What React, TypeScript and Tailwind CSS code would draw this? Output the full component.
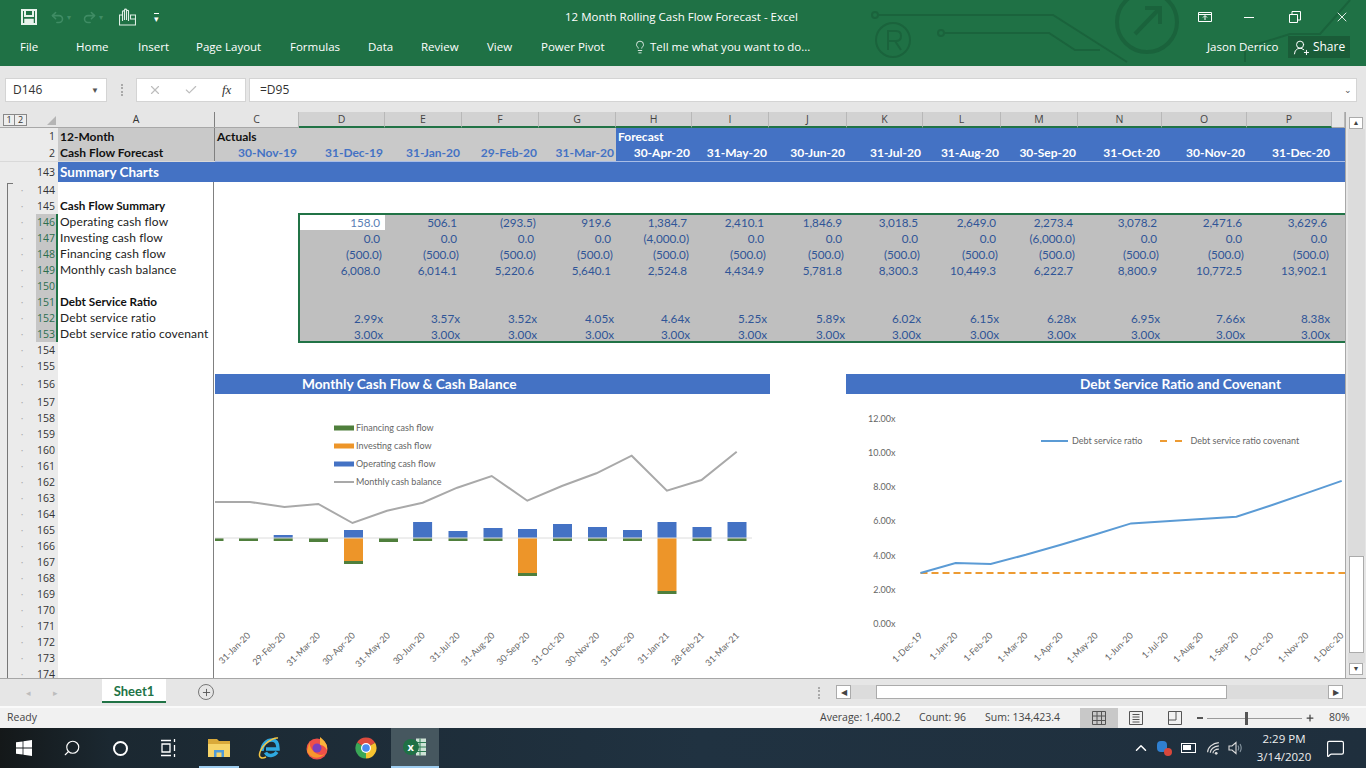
import { Check, ChevronUp, Lightbulb, MessageSquare, Plus, Redo2, Search, Undo2, UserRoundPlus, X } from "lucide-react"

const colLetters = ["C", "D", "E", "F", "G", "H", "I", "J", "K", "L", "M", "N", "O", "P", ""]
const colGrid = "grid grid-cols-[84px_86px_77px_77px_77px_76px_77px_78px_76px_78px_77px_84px_85px_85px_13px]"
const panelGrid = "grid grid-cols-[86px_77px_77px_77px_76px_77px_78px_76px_78px_77px_84px_85px_85px_13px]"
const dates = ["30-Nov-19", "31-Dec-19", "31-Jan-20", "29-Feb-20", "31-Mar-20", "30-Apr-20", "31-May-20", "30-Jun-20", "31-Jul-20", "31-Aug-20", "30-Sep-20", "31-Oct-20", "30-Nov-20", "31-Dec-20"]

const dsr = [2.99, 3.57, 3.52, 4.05, 4.64, 5.25, 5.89, 6.02, 6.15, 6.28, 6.95, 7.66, 8.38]

// data rows inside the selection, row 146 to 153
const panelRows: string[][] = [
  ["158.0", "506.1", "(293.5)", "919.6", "1,384.7", "2,410.1", "1,846.9", "3,018.5", "2,649.0", "2,273.4", "3,078.2", "2,471.6", "3,629.6"],
  ["0.0", "0.0", "0.0", "0.0", "(4,000.0)", "0.0", "0.0", "0.0", "0.0", "(6,000.0)", "0.0", "0.0", "0.0"],
  ["(500.0)", "(500.0)", "(500.0)", "(500.0)", "(500.0)", "(500.0)", "(500.0)", "(500.0)", "(500.0)", "(500.0)", "(500.0)", "(500.0)", "(500.0)"],
  ["6,008.0", "6,014.1", "5,220.6", "5,640.1", "2,524.8", "4,434.9", "5,781.8", "8,300.3", "10,449.3", "6,222.7", "8,800.9", "10,772.5", "13,902.1"],
  [],
  [],
  dsr.map((v) => v.toFixed(2) + "x"),
  dsr.map(() => "3.00x"),
]

type SheetRow = { n: number; h: string; label?: string; bold?: boolean }
const sheetRows: SheetRow[] = [
  { n: 144, h: "h-[16px]" },
  { n: 145, h: "h-[16px]", label: "Cash Flow Summary", bold: true },
  { n: 146, h: "h-[16px]", label: "Operating cash flow" },
  { n: 147, h: "h-[16px]", label: "Investing cash flow" },
  { n: 148, h: "h-[16px]", label: "Financing cash flow" },
  { n: 149, h: "h-[16px]", label: "Monthly cash balance" },
  { n: 150, h: "h-[16px]" },
  { n: 151, h: "h-[16px]", label: "Debt Service Ratio", bold: true },
  { n: 152, h: "h-[16px]", label: "Debt service ratio" },
  { n: 153, h: "h-[16px]", label: "Debt service ratio covenant" },
  { n: 154, h: "h-[16px]" },
  { n: 155, h: "h-[16px]" },
  { n: 156, h: "h-[20px]" },
  ...Array.from({ length: 18 }, (_, i) => ({ n: 157 + i, h: "h-[16px]" })),
]

const bars = [
  { x: 214, blue: 0, orange: 0, green: 3 },
  { x: 248.5, blue: 0, orange: 0, green: 3 },
  { x: 283.2, blue: 3, orange: 0, green: 3 },
  { x: 318.5, blue: 0, orange: 0, green: 4 },
  { x: 353.5, blue: 8, orange: 23, green: 3 },
  { x: 388.5, blue: 0, orange: 0, green: 4 },
  { x: 422.6, blue: 16, orange: 0, green: 3 },
  { x: 458, blue: 7, orange: 0, green: 3 },
  { x: 493, blue: 10, orange: 0, green: 3 },
  { x: 527.5, blue: 9, orange: 35, green: 3 },
  { x: 562.5, blue: 14, orange: 0, green: 3 },
  { x: 597.5, blue: 11, orange: 0, green: 3 },
  { x: 632.5, blue: 8, orange: 0, green: 3 },
  { x: 667, blue: 16, orange: 53, green: 3 },
  { x: 702, blue: 11, orange: 0, green: 3 },
  { x: 737, blue: 16, orange: 0, green: 3 },
]
const balanceLine = "215,502 250,502 284.5,507 318.3,504 352.5,523 387,510.7 422.6,502.7 457.2,487.7 491.7,476 527.3,500.7 561.9,486 596.4,473.3 631.7,455.7 666.9,490.7 701.5,480 736.7,451.7"
const leftLabels = ["31-Jan-20", "29-Feb-20", "31-Mar-20", "30-Apr-20", "31-May-20", "30-Jun-20", "31-Jul-20", "31-Aug-20", "30-Sep-20", "31-Oct-20", "30-Nov-20", "31-Dec-20", "31-Jan-21", "28-Feb-21", "31-Mar-21"]
const rightLabels = ["1-Dec-19", "1-Jan-20", "1-Feb-20", "1-Mar-20", "1-Apr-20", "1-May-20", "1-Jun-20", "1-Jul-20", "1-Aug-20", "1-Sep-20", "1-Oct-20", "1-Nov-20", "1-Dec-20"]
const axisLabels = ["12.00x", "10.00x", "8.00x", "6.00x", "4.00x", "2.00x", "0.00x"]

function CashFlowChart() {
  const base = 538
  return (
    <svg viewBox="215 394 555 284" className="block w-[555px] h-[284px] font-['Lato']">
      {bars.map((b) => (
        <g key={b.x}>
          {b.blue > 0 && <rect x={b.x - 9.5} y={base - b.blue} width="19" height={b.blue} fill="#4472c4" />}
          {b.orange > 0 && <rect x={b.x - 9.5} y={base} width="19" height={b.orange} fill="#ed9529" />}
          <rect x={b.x - 9.5} y={base + b.orange} width="19" height={b.green} fill="#4f7f3c" />
        </g>
      ))}
      <line x1="215" x2="752" y1="538" y2="538" stroke="#dcdcdc" />
      <polyline points={balanceLine} fill="none" stroke="#a9a9a9" strokeWidth="2" />
      <rect x="334" y="425.5" width="20" height="5" fill="#4f7f3c" />
      <rect x="334" y="443.5" width="20" height="5" fill="#ed9529" />
      <rect x="334" y="461.5" width="20" height="5" fill="#4472c4" />
      <line x1="334" x2="354" y1="482" y2="482" stroke="#a9a9a9" strokeWidth="2" />
      {["Financing cash flow", "Investing cash flow", "Operating cash flow", "Monthly cash balance"].map((t, i) => (
        <text key={t} x="356" y={431 + i * 18} className="text-[9px] fill-[#666666]">{t}</text>
      ))}
      {leftLabels.map((t, i) => (
        <text key={t} textAnchor="end" transform={`translate(${251 + i * 34.9} 636) rotate(-45)`} className="text-[9px] fill-[#666666]">{t}</text>
      ))}
    </svg>
  )
}

function RatioChart() {
  const ratioY = (v: number) => 624 - v * 17.08
  const ratioX = (i: number) => 920.5 + i * 35.1
  return (
    <svg viewBox="846 394 499 284" className="block w-[499px] h-[284px] font-['Lato']">
      {axisLabels.map((t, i) => (
        <text key={t} x="895.5" y={422 + i * 34.16} textAnchor="end" className="text-[9px] fill-[#666666]">{t}</text>
      ))}
      <line x1="920.5" x2="1345" y1="573" y2="573" stroke="#ed9b33" strokeWidth="2" strokeDasharray="7 4" />
      <polyline points={dsr.map((v, i) => `${ratioX(i)},${ratioY(v)}`).join(" ")} fill="none" stroke="#5b9bd5" strokeWidth="2" />
      <line x1="1041" x2="1068" y1="441" y2="441" stroke="#5b9bd5" strokeWidth="2" />
      <text x="1072" y="444" className="text-[9px] fill-[#666666]">Debt service ratio</text>
      <line x1="1160" x2="1182" y1="441" y2="441" stroke="#ed9b33" strokeWidth="2" strokeDasharray="7 8" />
      <text x="1190.5" y="444" className="text-[9px] fill-[#666666]">Debt service ratio covenant</text>
      {rightLabels.map((t, i) => (
        <text key={t} textAnchor="end" transform={`translate(${923 + i * 35.1} 636) rotate(-45)`} className="text-[9px] fill-[#666666]">{t}</text>
      ))}
    </svg>
  )
}

function TitleBar() {
  const tabs = [
    { t: "Home", c: "w-[62px]" },
    { t: "Insert", c: "w-[58px]" },
    { t: "Page Layout", c: "w-[94px]" },
    { t: "Formulas", c: "w-[78px]" },
    { t: "Data", c: "w-[53px]" },
    { t: "Review", c: "w-[66px]" },
    { t: "View", c: "w-[54px]" },
    { t: "Power Pivot", c: "w-[92px]" },
  ]
  return (
    <div className="relative h-[66px] shrink-0 bg-[#1f7145] text-white font-['Open_Sans'] text-[11.5px] whitespace-nowrap">
      <svg viewBox="0 0 1366 66" className="absolute inset-0 w-[1366px] h-[66px]" fill="none" stroke="#1a633c" strokeWidth="2">
        <circle cx="875" cy="15" r="3" />
        <path d="M878 15H1053L1127 62" />
        <circle cx="941" cy="33" r="3" />
        <path d="M944 33H1049L1075 50H1100" />
        <circle cx="893" cy="40" r="17" />
        <path d="M888 50V31H896Q901 31 901 36T896 41H888M895 41L901 50" />
        <circle cx="1147" cy="22" r="30" strokeWidth="4" />
        <path d="M1135 34L1160 8M1145 8H1160V24" strokeWidth="4" />
        <path d="M1245 62V48L1290 34H1320L1350 0" />
      </svg>
      <div className="relative flex items-center h-[33px] pt-[1px]">
        <div className="w-[565px] flex items-center">
          <svg viewBox="0 0 16 16" className="ml-[21px] w-[16px] h-[16px]" fill="none" stroke="#e8f3ec" strokeWidth="2">
            <path d="M1 1H15V15H1ZM4 1V7H12V1" />
            <path d="M4 15V10.500H12V15" strokeWidth="1.500" fill="#e8f3ec" />
          </svg>
          <Undo2 className="ml-[13px] w-[15px] h-[15px] text-[#3f8c64]" strokeWidth={2.5} />
          <span className="ml-[2px] text-[8px] text-[#3f8c64]">▾</span>
          <Redo2 className="ml-[11px] w-[15px] h-[15px] text-[#3f8c64]" strokeWidth={2.5} />
          <span className="ml-[2px] text-[8px] text-[#3f8c64]">▾</span>
          <svg viewBox="0 0 17 18" className="ml-[16px] w-[17px] h-[18px]" fill="none" stroke="#dff0e6" strokeWidth="1.100">
            <path d="M3.500 7H.5V17H16.500V7H11.500V11H16.500" />
            <path d="M3.500 13V3.500C3.500 2.500 5.500 2.500 5.500 3.500V12M5.500 12V2C5.500 .8 7.500 .8 7.500 2V12M7.500 12V3C7.500 2 9.500 2 9.500 3V13" />
          </svg>
          <span className="ml-[18px] text-[9px] leading-[9px] border-t border-white mt-[2px]">▾</span>
        </div>
        <span className="w-[300px]">12 Month Rolling Cash Flow Forecast - Excel</span>
        <svg viewBox="0 0 14 14" className="ml-[333px] w-[14px] h-[14px]" fill="none" stroke="#fff">
          <path d="M.5 2.5H13.5V11.5H.5ZM.5 4.5H13.5M7 10V6M5 7.5L7 5.5L9 7.5" />
        </svg>
        <div className="ml-[32px] w-[10px] h-px bg-white" />
        <svg viewBox="0 0 12 12" className="ml-[35px] w-[12px] h-[12px]" fill="none" stroke="#fff">
          <path d="M.5 3.5H8.5V11.5H.5ZM3 3V.5H11.5V9H9" />
        </svg>
        <X className="ml-[33px] w-[16px] h-[16px]" strokeWidth={1.3} />
      </div>
      <div className="relative flex items-center h-[28px]">
        <span className="ml-[20px] w-[56px]">File</span>
        {tabs.map((tab) => (
          <span key={tab.t} className={tab.c}>{tab.t}</span>
        ))}
        <Lightbulb className="mr-[3px] w-[14px] h-[14px]" strokeWidth={1.4} />
        <span className="w-[557px]">Tell me what you want to do...</span>
        <span className="w-[81px]">Jason Derrico</span>
        <div className="w-[62px] h-[22px] bg-[#1a5c38] flex items-center justify-center gap-[3px]">
          <UserRoundPlus className="w-[17px] h-[17px]" strokeWidth={1.4} />
          <span className="text-[12px]">Share</span>
        </div>
      </div>
    </div>
  )
}

function FormulaBar() {
  return (
    <div className="h-[46px] shrink-0 bg-[#e6e6e6] flex items-center font-['Open_Sans'] text-[12px] text-[#333] pt-[2px]">
      <div className="ml-[5px] w-[102px] h-[24px] bg-white border border-[#d4d4d4] flex items-center justify-between px-[7px]">
        <span>D146</span>
        <span className="text-[8px] text-[#555]">▼</span>
      </div>
      <div className="ml-[14px] w-[2px] h-[12px] border-l-2 border-dotted border-[#aaa]" />
      <div className="ml-[13px] w-[110px] h-[24px] bg-white border border-[#d4d4d4] flex items-center">
        <X className="ml-[11px] w-[14px] h-[14px] text-[#bdbdbd]" />
        <Check className="ml-[22px] w-[14px] h-[14px] text-[#bdbdbd]" />
        <span className="ml-[24px] font-['Liberation_Serif'] italic text-[13px] text-[#333]">fx</span>
      </div>
      <div className="ml-[3px] w-[1108px] h-[24px] bg-white border border-[#d4d4d4] flex items-center justify-between pl-[10px] pr-[4px]">
        <span>=D95</span>
        <span className="text-[9px] text-[#555]">⌄</span>
      </div>
    </div>
  )
}

function LeftRows() {
  return (
    <div className="w-[215px] shrink-0 font-['Open_Sans'] text-[10.5px] text-[#333] relative whitespace-nowrap">
      <div className="h-[16px] flex bg-[#e6e6e6] border-b border-[#a8a8a8]">
        <div className="w-[58px] relative flex items-center">
          <div className="ml-[3px] w-[12px] h-[12px] border border-[#888] bg-[#eee] text-[9px] leading-[10px] text-center">1</div>
          <div className="w-[12px] h-[12px] border border-l-0 border-[#888] bg-[#eee] text-[9px] leading-[10px] text-center">2</div>
          <div className="absolute right-[2px] bottom-[2px] w-0 h-0 border-l-[9px] border-l-transparent border-b-[9px] border-b-[#b5b5b5]" />
        </div>
        <div className="w-[157px] border-r border-[#808080] text-center leading-[15px]">A</div>
      </div>
      <div className="flex h-[17px]">
        <div className="w-[58px] bg-[#ebebeb] text-right pr-[3px] leading-[17px]">1</div>
        <div className="w-[156px] bg-[#c9c9c9] pl-[2px] font-['Lato'] font-bold text-[12px] leading-[17px] text-[#111]">12-Month</div>
        <div className="w-px bg-[#808080]" />
      </div>
      <div className="flex h-[17px] border-b border-[#d9d9d9]">
        <div className="w-[58px] bg-[#ebebeb] text-right pr-[3px] leading-[16px]">2</div>
        <div className="w-[156px] bg-[#c9c9c9] pl-[2px] font-['Lato'] font-bold text-[12px] leading-[16px] text-[#111]">Cash Flow Forecast</div>
        <div className="w-px bg-[#808080]" />
      </div>
      <div className="flex h-[20px]">
        <div className="w-[58px] bg-[#ebebeb] text-right pr-[3px] leading-[20px]">143</div>
        <div className="w-[157px] bg-[#4472c4] pl-[2px] font-['Lato'] font-bold text-[13.5px] leading-[20px] text-white">Summary Charts</div>
      </div>
      {sheetRows.map((r) => {
        const selected = r.n >= 146 && r.n <= 153
        return (
          <div key={r.n} className={`flex items-stretch ${r.h}`}>
            <div className="w-[36px] bg-[#ebebeb] flex items-center justify-center">
              <span className="ml-[8px] text-[#aaa] text-[10px]">·</span>
            </div>
            <div className={selected ? "w-[22px] pt-[1px] bg-[#c6c6c6] border-r-2 border-[#217346] flex items-center justify-end pr-[1px] text-[#2d6e4e]" : "w-[22px] pt-[1px] bg-[#ebebeb] flex items-center justify-end pr-[3px]"}>{r.n}</div>
            <div className={r.bold ? "w-[156px] pl-[2px] border-r border-[#808080] font-['Lato'] font-bold text-[11.7px] leading-[15px] text-[#111]" : "w-[156px] pl-[2px] border-r border-[#808080] font-['Lato'] tracking-[0.13px] text-[12px] leading-[16px] text-[#222]"}>{r.label}</div>
          </div>
        )
      })}
      <div className="absolute left-[7px] top-[71px] bottom-0 w-[6px] border-l border-t border-[#777]" />
    </div>
  )
}

function RightSheet() {
  return (
    <div className="w-[1130px] shrink-0 overflow-hidden font-['Lato'] text-[12px]">
      <div className={`${colGrid} h-[16px] bg-[#e6e6e6] font-['Open_Sans'] text-[10.5px] text-[#444]`}>
        {colLetters.map((c, i) => (
          <div key={i} className={i >= 1 && i <= 13 ? "bg-[#d2d2d2] border-b-2 border-[#217346] border-r border-r-[#b8b8b8] text-center leading-[14px]" : "border-b border-[#a8a8a8] border-r border-r-[#b8b8b8] text-center leading-[15px]"}>{c}</div>
        ))}
      </div>
      <div className="flex h-[17px] font-bold leading-[17px]">
        <div className="w-[401px] bg-[#c9c9c9] pl-[2px] text-[#111]">Actuals</div>
        <div className="w-[729px] bg-[#4472c4] pl-[2px] text-white">Forecast</div>
      </div>
      <div className={`${colGrid} h-[17px] bg-[#4472c4] border-b border-[#a9bde6] font-bold leading-[16px]`}>
        {dates.map((d, i) => (
          <div key={d + i} className={i < 5 ? "bg-[#c9c9c9] text-[#4472c4] text-right pr-[2px]" : "text-white text-right pr-[2px]"}>{d}</div>
        ))}
        <div />
      </div>
      <div className="h-[20px] bg-[#4472c4]" />
      <div className="h-[32px]" />
      <div className="ml-[84px] relative w-[1050px] h-[128px] bg-[#bfbfbf] outline-2 -outline-offset-1 outline-[#217346] text-[#2f5597] text-[11.7px]">
        {panelRows.map((cells, r) => (
          <div key={r} className={`${panelGrid} h-[16px] leading-[16px]`}>
            {cells.map((v, c) => (
              <div key={c} className={r === 0 && c === 0 ? "bg-white text-[#5b7fb5] text-right pr-[5px]" : v.startsWith("(") ? "text-right pr-[3px]" : v.endsWith("x") ? "text-right pr-[2px]" : "text-right pr-[5px]"}>{v}</div>
            ))}
          </div>
        ))}
      </div>
      <div className="mt-[32px] flex items-start gap-[76px]">
        <div className="w-[555px] shrink-0">
          <div className="h-[20px] bg-[#4472c4] pl-[87px] text-white font-bold text-[13.7px] leading-[20px]">Monthly Cash Flow &amp; Cash Balance</div>
          <CashFlowChart />
        </div>
        <div className="w-[499px] shrink-0">
          <div className="h-[20px] bg-[#4472c4] text-white font-bold text-[13.7px] leading-[20px] pl-[234px]">Debt Service Ratio and Covenant</div>
          <RatioChart />
        </div>
      </div>
    </div>
  )
}

function VScroll() {
  return (
    <div className="w-[21px] shrink-0 bg-[#e6e6e6] flex flex-col items-center pt-[5px] pb-[3px] border-l border-[#a8a8a8]">
      <div className="w-[14px] h-[12px] bg-white border border-[#ababab] text-[7px] leading-[10px] text-center text-[#444]">▲</div>
      <div className="w-[17px] flex-1 bg-[#dcdcdc]" />
      <div className="w-[15px] h-[97px] bg-white border border-[#ababab]" />
      <div className="w-[17px] h-[10px] bg-[#dcdcdc]" />
      <div className="w-[14px] h-[12px] bg-white border border-[#ababab] text-[7px] leading-[10px] text-center text-[#444]">▼</div>
    </div>
  )
}

function TabBar() {
  return (
    <div className="h-[28px] shrink-0 bg-[#e6e6e6] border-t border-[#a6a6a6] flex items-start font-['Open_Sans'] relative">
      <span className="ml-[26px] mt-[7px] text-[9px] text-[#bdbdbd]">◂</span>
      <span className="ml-[22px] mt-[7px] text-[9px] text-[#bdbdbd]">▸</span>
      <div className="ml-[44px] w-[64px] h-[24px] bg-white border-b-2 border-[#217346] text-center font-['Lato'] font-bold text-[13px] leading-[24px] text-[#217346]">Sheet1</div>
      <div className="ml-[32px] mt-[5px] w-[16px] h-[16px] rounded-full border border-[#777] flex items-center justify-center">
        <Plus className="w-[11px] h-[11px] text-[#555]" />
      </div>
      <div className="ml-[604px] mt-[8px] w-[2px] h-[12px] border-l-2 border-dotted border-[#aaa]" />
      <div className="ml-[16px] mt-[6px] w-[15px] h-[14px] bg-white border border-[#ababab] text-[8px] leading-[12px] text-center text-[#444]">◀</div>
      <div className="mt-[6px] w-[25px] h-[14px] bg-[#dcdcdc]" />
      <div className="mt-[6px] w-[351px] h-[14px] bg-white border border-[#ababab]" />
      <div className="mt-[6px] w-[101px] h-[14px] bg-[#dcdcdc]" />
      <div className="mt-[6px] w-[15px] h-[14px] bg-white border border-[#ababab] text-[8px] leading-[12px] text-center text-[#444]">▶</div>
    </div>
  )
}

function StatusBar() {
  return (
    <div className="h-[22px] shrink-0 bg-[#f1f1f1] border-t-2 border-[#fafafa] flex items-center font-['Open_Sans'] text-[10.5px] text-[#444]">
      <span className="ml-[7px] w-[813px]">Ready</span>
      <span className="w-[99px]">Average: 1,400.2</span>
      <span className="w-[66px]">Count: 96</span>
      <span className="w-[95px]">Sum: 134,423.4</span>
      <div className="w-[38px] h-[20px] bg-[#c8c8c8] flex items-center justify-center">
        <svg viewBox="0 0 14 14" className="w-[14px] h-[14px]" fill="none" stroke="#555"><path d="M.5.5H13.5V13.5H.5ZM.5 5H13.5M.5 9.5H13.5M5 .5V13.5M9.5 .5V13.5" /></svg>
      </div>
      <svg viewBox="0 0 14 14" className="ml-[11px] w-[14px] h-[14px]" fill="none" stroke="#555"><path d="M.5.5H13.5V13.5H.5ZM3.5 3.5H10.5M3.5 6H10.5M3.5 8.5H10.5M3.5 11H10.5" /></svg>
      <svg viewBox="0 0 14 14" className="ml-[25px] w-[14px] h-[14px]" fill="none" stroke="#555"><path d="M.5.5H13.5V13.5H.5ZM.5 9H8V.5" /></svg>
      <span className="ml-[15px] w-[6px] h-[2px] bg-[#555]" />
      <div className="ml-[4px] w-[95px] h-px bg-[#9a9a9a] relative">
        <div className="absolute left-[38px] top-[-6px] w-[3px] h-[13px] bg-[#555]" />
      </div>
      <Plus className="ml-[3px] w-[10px] h-[10px] text-[#444]" strokeWidth={3} />
      <span className="ml-[14px]">80%</span>
    </div>
  )
}

function Taskbar() {
  return (
    <div className="h-[40px] shrink-0 bg-[linear-gradient(90deg,#141819_0,#1b2831_110px,#203241_700px,#1f2f3d_100%)] flex items-center relative font-['Open_Sans'] text-[11.5px] text-white">
      <svg viewBox="0 0 16 16" className="ml-[16px] w-[16px] h-[16px]" fill="#fff"><path d="M0 2.3L6.6 1.4V7.6H0ZM7.4 1.3L16 0V7.6H7.4ZM0 8.4H6.6V14.6L0 13.7ZM7.4 8.4H16V16L7.4 14.7Z" /></svg>
      <Search className="ml-[31px] w-[18px] h-[18px] -scale-x-100" strokeWidth={1.5} />
      <div className="ml-[32px] w-[15px] h-[15px] rounded-full border-2 border-white" />
      <svg viewBox="0 0 16 18" className="ml-[33px] w-[16px] h-[18px]" fill="none" stroke="#fff" strokeWidth="1.3"><path d="M0 1.5H10M0 16.5H10M1 5H9V13H1ZM13.5 0V3M13.5 6V12M13.5 15V18" /></svg>
      <svg viewBox="0 0 22 20" className="ml-[31px] w-[22px] h-[20px]"><path d="M0 1H9L11 3H22V19H0Z" fill="#d9a93a" /><rect x="0" y="6" width="22" height="13" fill="#f6d469" /><path d="M6 19V12H16V19H13.500V14.500H8.500V19Z" fill="#4f9bd9" /></svg>
      <svg viewBox="0 0 24 24" className="ml-[27px] w-[24px] h-[24px]" fill="none"><path d="M5 15C5 8 10 4 15 4C20 4 21 9 21 13H9M8.500 16.500C11 21 17 20 20 16" stroke="#2fa9e0" strokeWidth="3.500" /><path d="M21 2C16 1 6 8 3 16C1 22 5 23 9 21" stroke="#f3c545" strokeWidth="1.500" /></svg>
      <svg viewBox="0 0 24 24" className="ml-[24px] w-[24px] h-[24px]"><circle cx="12" cy="13" r="10.500" fill="#ee4f4a" /><path d="M15 1C20 5 23 9 22 14C20 10 17 9 15 9Z" fill="#f9b43b" /><path d="M5 4C3 9 8 19 17 19C21 18 22 16 22.500 13C21 22 6 26 2 15Z" fill="#f7962e" /><circle cx="12" cy="12" r="4.500" fill="#7b3fbd" /></svg>
      <svg viewBox="0 0 24 24" className="ml-[25px] w-[24px] h-[24px]"><path d="M12 1.500A10.500 10.500 0 0 1 21.100 6.750L12 12L3 6.500A10.500 10.500 0 0 1 12 1.500Z" fill="#dd4b3e" /><path d="M21.100 6.750A10.500 10.500 0 0 1 12 22.500L12 12Z" fill="#f6c330" /><path d="M12 22.500A10.500 10.500 0 0 1 3 6.500L12 12Z" fill="#3aa757" /><circle cx="12" cy="12" r="5" fill="#fff" /><circle cx="12" cy="12" r="3.800" fill="#4a8bf0" /></svg>
      <div className="ml-[13px] w-[48px] h-[40px] bg-[#46575f] border-b-2 border-[#9ecdf0] flex items-center justify-center">
        <svg viewBox="0 0 24 22" className="w-[24px] h-[22px]"><path d="M13 2.500H23V19.500H13Z" fill="#cfe3d6" /><path d="M13 6.500H23M13 11H23M13 15.500H23M17 2.500V19.500" stroke="#2c7a52" /><circle cx="8" cy="11" r="8" fill="#1f7145" /><text x="4.500" y="15" fontSize="11" fontWeight="700" fill="#fff">x</text></svg>
      </div>
      <div className="absolute left-[199px] bottom-0 w-[40px] h-[2px] bg-[#9ecdf0]" />
      <ChevronUp className="ml-[693px] w-[18px] h-[18px]" strokeWidth={2} />
      <div className="ml-[7px] w-[15px] h-[15px] relative">
        <div className="absolute left-0 top-0 w-[10px] h-[11px] rounded-[4px] bg-[#2f7fd0]" />
        <div className="absolute right-0 bottom-0 w-[8px] h-[8px] rounded-full bg-[#d9473b]" />
      </div>
      <div className="ml-[9px] w-[15px] h-[10px] border-[1.5px] border-white p-[1px]"><div className="w-[8px] h-[5px] bg-white" /></div>
      <svg viewBox="0 0 14 14" className="ml-[10px] w-[15px] h-[15px]" fill="none" stroke="#ddd" strokeWidth="1.100"><path d="M1.500 10.500C1.500 6 6 2 12 1.500M4 11C4 8 7 5 12 4.500M6.500 11.500C6.500 9.500 8.500 7.500 12 7.500" /><circle cx="9.500" cy="11.500" r="1.300" fill="#ddd" stroke="none" /></svg>
      <svg viewBox="0 0 16 14" className="ml-[7px] w-[16px] h-[14px]" fill="none" stroke="#ddd" strokeWidth="1.100"><path d="M1 5H4L8 1.500V12.500L4 9H1Z" /><path d="M10 4.500C11 6 11 8 10 9.500M12 3C13.500 5.500 13.500 8.500 12 11" stroke="#8a99a3" /></svg>
      <div className="ml-[4px] w-[72px] text-center leading-[18px] text-[#eee]">
        <div>2:29 PM</div>
        <div>3/14/2020</div>
      </div>
      <MessageSquare className="ml-[6px] w-[19px] h-[19px]" strokeWidth={1.5} />
    </div>
  )
}

export default function App() {
  return (
    <div className="w-[1366px] h-[768px] overflow-hidden flex flex-col bg-white">
      <TitleBar />
      <FormulaBar />
      <div className="h-[566px] shrink-0 flex overflow-hidden">
        <LeftRows />
        <RightSheet />
        <VScroll />
      </div>
      <TabBar />
      <StatusBar />
      <Taskbar />
    </div>
  )
}
